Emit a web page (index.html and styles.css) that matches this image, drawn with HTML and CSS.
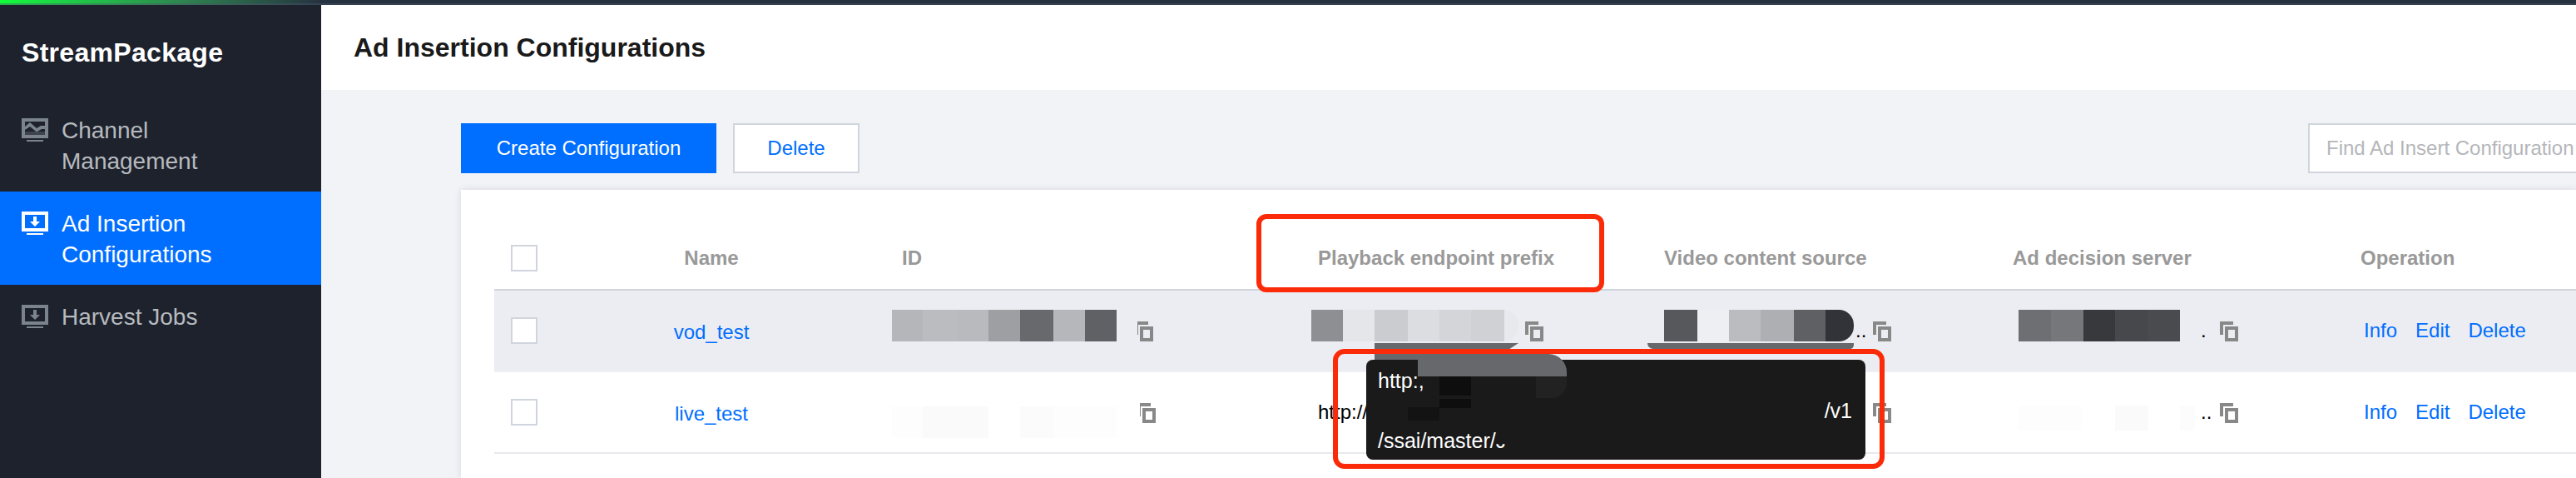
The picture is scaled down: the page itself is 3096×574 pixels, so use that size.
FILE: index.html
```html
<!DOCTYPE html>
<html lang="en">
<head>
<meta charset="utf-8">
<title>Ad Insertion Configurations</title>
<link rel="stylesheet" href="styles.css">
</head>
<body>
<svg class="defs" width="0" height="0" aria-hidden="true">
  <symbol id="copy" viewBox="0 0 22 24"><path fill-rule="evenodd" d="M0 0H16V4H4V16H0Z M6 6H22V24H6Z M10 10V20H18V10Z"/></symbol>
  <symbol id="copy-cut" viewBox="3 0 19 24"><path fill-rule="evenodd" d="M0 0H16V4H4V16H0Z M6 6H22V24H6Z M10 10V20H18V10Z"/></symbol>
  <symbol id="monitor-down" viewBox="0 0 32 28"><path fill-rule="evenodd" d="M0 0H32V24H0Z M4 4V20H28V4Z M6 26H26V28H6Z"/><path d="M14 6H18V12H22L16 18L10 12H14Z"/></symbol>
  <symbol id="monitor-wave" viewBox="0 0 32 28"><path fill-rule="evenodd" d="M0 0H32V24H0Z M4 4V20H28V4Z M6 26H26V28H6Z"/><path d="M4 16H28V20H4Z" opacity=".35"/><path d="M4 10L10 5L18 12L23 9H28V13H24L18 16.500L10 10L4 14Z"/></symbol>
</svg>

<div class="topbar"></div>
<div class="shell">
  <aside class="sidebar">
    <div class="brand">StreamPackage</div>
    <nav class="nav">
      <a class="nav-item"><svg class="nav-icon"><use href="#monitor-wave"/></svg><span>Channel<br>Management</span></a>
      <a class="nav-item is-active"><svg class="nav-icon"><use href="#monitor-down"/></svg><span>Ad Insertion<br>Configurations</span></a>
      <a class="nav-item"><svg class="nav-icon"><use href="#monitor-down"/></svg><span>Harvest Jobs</span></a>
    </nav>
  </aside>
  <main class="main">
    <header class="page-head"><h1>Ad Insertion Configurations</h1></header>
    <div class="content">
      <div class="toolbar">
        <button class="btn btn-primary">Create Configuration</button>
        <button class="btn btn-plain">Delete</button>
        <input class="search" placeholder="Find Ad Insert Configuration Name">
      </div>
      <section class="card">
        <div class="row row-head">
          <div class="cell"><span class="check"></span></div>
          <div class="cell cell-name">Name</div>
          <div class="cell pad-12">ID</div>
          <div class="cell pad-8">Playback endpoint prefix</div>
          <div class="cell">Video content source</div>
          <div class="cell">Ad decision server</div>
          <div class="cell">Operation</div>
        </div>
        <div class="row row-hover">
          <div class="cell"><span class="check"></span></div>
          <div class="cell cell-name"><a class="link">vod_test</a></div>
          <div class="cell"><i class="mosaic m-id"></i><svg class="copy copy-narrow gap-25"><use href="#copy-cut"/></svg></div>
          <div class="cell"><i class="mosaic m-pb"></i><svg class="copy gap-8"><use href="#copy"/></svg></div>
          <div class="cell"><i class="mosaic m-vid"></i><span class="dots">..</span><svg class="copy"><use href="#copy"/></svg></div>
          <div class="cell pad-7"><i class="mosaic m-ad"></i><span class="dots dots-ad">.</span><svg class="copy"><use href="#copy"/></svg></div>
          <div class="cell ops"><a class="link">Info</a><a class="link">Edit</a><a class="link">Delete</a></div>
        </div>
        <div class="row">
          <div class="cell"><span class="check"></span></div>
          <div class="cell cell-name"><a class="link">live_test</a></div>
          <div class="cell"><i class="faint f-id"></i><svg class="copy copy-narrow gap-28"><use href="#copy-cut"/></svg></div>
          <div class="cell pad-8">http://2</div>
          <div class="cell"><svg class="copy gap-251"><use href="#copy"/></svg></div>
          <div class="cell pad-7"><i class="faint f-ad"></i><span class="dots">..</span><svg class="copy"><use href="#copy"/></svg></div>
          <div class="cell ops"><a class="link">Info</a><a class="link">Edit</a><a class="link">Delete</a></div>
        </div>
      </section>
    </div>
  </main>
</div>

<i class="smear smear-a"></i>
<i class="smear smear-c"></i>
<div class="tooltip">
  <div class="tip-line">http:,</div>
  <div class="tip-line tip-right">/v1</div>
  <div class="tip-line">/ssai/master/<span class="tip-cut">J</span></div>
  <i class="patch patch-a"></i>
  <i class="patch patch-b"></i>
  <i class="patch patch-c"></i>
  <i class="patch patch-d"></i>
</div>
<i class="smear smear-b"></i>
<i class="callout callout-head"></i>
<i class="callout callout-tip"></i>
</body>
</html>
```
FILE: styles.css
```css
* { box-sizing: border-box; }

html, body {
  margin: 0;
  width: 3096px;
  height: 574px;
  overflow: hidden;
}

body {
  position: relative;
  display: flex;
  flex-direction: column;
  background: #f2f3f7;
  color: #000;
  font-family: "Liberation Sans", Arial, sans-serif;
  font-size: 24px;
}

.defs { position: absolute; }

.topbar {
  flex: none;
  height: 6px;
  background: linear-gradient(90deg, #12fd3a 0, #1cd944 60px, #2f8450 220px, #26323f 386px);
  border-bottom: 2px solid rgba(70, 85, 105, .45);
}

.shell { flex: 1; display: flex; min-height: 0; }

/* Sidebar */
.sidebar {
  flex: none;
  width: 386px;
  background: #1e222d;
  color: #b6babf;
}

.brand {
  height: 112px;
  padding: 38px 0 0 26px;
  color: #fff;
  font-size: 32px;
  font-weight: 700;
  line-height: 38px;
  letter-spacing: .3px;
}

.nav-item {
  display: flex;
  gap: 16px;
  min-height: 112px;
  padding: 20px 26px 0;
  font-size: 28px;
  line-height: 37px;
}

.nav-item.is-active { background: #006eff; color: #fff; }

.nav-icon {
  flex: none;
  width: 32px;
  height: 28px;
  margin-top: 4px;
  fill: #7b838c;
}

.is-active .nav-icon { fill: #fff; }

/* Main */
.main {
  flex: 1;
  min-width: 0;
  display: flex;
  flex-direction: column;
}

.page-head {
  flex: none;
  height: 102px;
  padding-left: 39px;
  background: #fff;
  display: flex;
  align-items: center;
}

.page-head h1 {
  margin: 0;
  color: #1a1a1a;
  font-size: 32px;
  font-weight: 700;
}

.content {
  flex: 1;
  min-height: 0;
  padding: 40px 0 0 168px;
  display: flex;
  flex-direction: column;
}

.toolbar { flex: none; display: flex; height: 60px; }

.btn {
  height: 60px;
  padding: 0;
  border: 2px solid #d0d5dd;
  font: 24px "Liberation Sans", Arial, sans-serif;
}

.btn-primary {
  width: 307px;
  border-color: #006eff;
  background: #006eff;
  color: #fff;
}

.btn-plain {
  width: 152px;
  margin-left: 20px;
  background: #fff;
  color: #006eff;
}

.search {
  width: 322px;
  height: 60px;
  margin-left: auto;
  padding: 0 0 0 20px;
  background: #fff;
  border: 2px solid #d0d5dd;
  border-right: 0;
  font: 24px "Liberation Sans", Arial, sans-serif;
}

.search::placeholder { color: #b4b6ba; opacity: 1; }

/* Table */
.card {
  flex: 1;
  margin-top: 20px;
  padding: 45px 0 0 40px;
  background: #fff;
  box-shadow: 0 0 8px rgba(54, 58, 80, .14);
}

.row {
  display: grid;
  grid-template-columns: 56px 422px 504px 424px 419px 418px 1fr;
  height: 98px;
  border-bottom: 2px solid #e8e9ee;
}

.row-head {
  height: 76px;
  border-bottom-color: #d0d5dd;
  color: #999;
  font-weight: 700;
}

.row-hover { background: #ecedf2; border-bottom-color: #eeeff3; }

.cell {
  min-width: 0;
  display: flex;
  align-items: center;
  white-space: nowrap;
}

.cell-name { justify-content: center; padding-right: 12px; }
.cell-name .link { margin-top: 3px; }

.pad-12 { padding-left: 12px; }
.pad-8 { padding-left: 8px; }
.pad-7 { padding-left: 7px; }

.check {
  width: 32px;
  height: 32px;
  margin-left: 20px;
  background: #fff;
  border: 2px solid #d0d5dd;
}

.link { color: #006eff; }

.ops { padding-left: 4px; gap: 22px; }

.copy {
  flex: none;
  width: 22px;
  height: 24px;
  margin-top: 2px;
  fill: #888;
}

.copy-narrow { width: 19px; }

.gap-8 { margin-left: 8px; }
.gap-25 { margin-left: 25px; }
.gap-28 { margin-left: 28px; }
.gap-251 { margin-left: 251px; }

.dots { flex: none; width: 30px; padding-left: 7px; }
.dots-ad { width: 48px; padding-left: 25px; }
.m-vid + .dots { width: 23px; padding-left: 2px; }

.mosaic, .faint { flex: none; display: block; height: 38px; }
.mosaic { margin-top: -12px; }
.faint { margin-top: 24px; }

.m-id {
  width: 270px;
  background: linear-gradient(90deg,
    #b5b6b9 0 37px, #bbbcbf 37px 78px, #b9babd 78px 116px, #9e9fa2 116px 154px,
    #68696d 154px 194px, #b6b7ba 194px 232px, #606165 232px);
}

.m-pb {
  width: 249px;
  border-radius: 0 18px 18px 0;
  background: linear-gradient(90deg,
    #8e8f92 0 38px, #e5e6ea 38px 76px, #cbccd0 76px 116px, #dcdde1 116px 154px,
    #d4d5d9 154px 192px, #d0d1d5 192px 232px, #e8e9ed 232px);
}

.m-vid {
  width: 228px;
  border-radius: 0 18px 18px 0;
  background: linear-gradient(90deg,
    #57585c 0 40px, #eeeff3 40px 78px, #bbbcc0 78px 116px, #aeafb3 116px 156px,
    #5f6064 156px 194px, #323338 194px);
}

.m-ad {
  width: 194px;
  background: linear-gradient(90deg,
    #6e6f73 0 39px, #76777b 39px 78px, #38393d 78px 116px, #47484c 116px 156px, #4a4b4f 156px);
}

.f-id {
  width: 270px;
  background: linear-gradient(90deg,
    #fdfdfd 0 37px, #fafafa 37px 116px, #fff 116px 154px, #fbfbfb 154px 194px, #fdfdfd 194px);
}

.f-ad {
  width: 212px;
  height: 30px;
  margin-top: 14px;
  background: linear-gradient(90deg,
    #fdfdfd 0 76px, #fff 76px 116px, #fafafa 116px 156px, #fff 156px 194px, #fcfcfc 194px);
}

/* Tooltip and overlays drawn on top of the table */
.tooltip {
  position: absolute;
  left: 1642px;
  top: 432px;
  width: 600px;
  height: 120px;
  padding: 7px 14px 0;
  background: #1a1a1a;
  border-radius: 8px;
  color: #fff;
  font-size: 25px;
  line-height: 36px;
  overflow: hidden;
}

.tip-right { padding-right: 2px; text-align: right; }

.tip-cut { display: inline-block; clip-path: inset(62% 0 0 0); }

.patch { position: absolute; display: block; }
.patch-a { left: 88px; top: 20px; width: 38px; height: 23px; background: #0e0e0e; }
.patch-b { left: 88px; top: 47px; width: 38px; height: 11px; background: #0e0e0e; }
.patch-c { left: 204px; top: 20px; width: 37px; height: 26px; border-radius: 0 0 18px 0; background: #222; }
.patch-d { left: 50px; top: 57px; width: 38px; height: 16px; background: #131313; }

.smear { position: absolute; display: block; background: #67686c; }

.smear-a {
  left: 1652px;
  top: 412px;
  width: 173px;
  height: 20px;
  clip-path: polygon(0 0, 100% 0, 93% 40%, 93% 100%, 0 100%);
}

.smear-b {
  left: 1704px;
  top: 425px;
  width: 179px;
  height: 27px;
  border-radius: 0 22px 0 0;
}

.smear-c {
  left: 1980px;
  top: 412px;
  width: 248px;
  height: 7px;
  border-radius: 0 0 16px 24px;
}

.callout {
  position: absolute;
  display: block;
  border: 6px solid #fb2a08;
}

.callout-head {
  left: 1510px;
  top: 257px;
  width: 418px;
  height: 94px;
  border-radius: 12px;
}

.callout-tip {
  left: 1602px;
  top: 419px;
  width: 663px;
  height: 144px;
  border-radius: 14px;
}
```
